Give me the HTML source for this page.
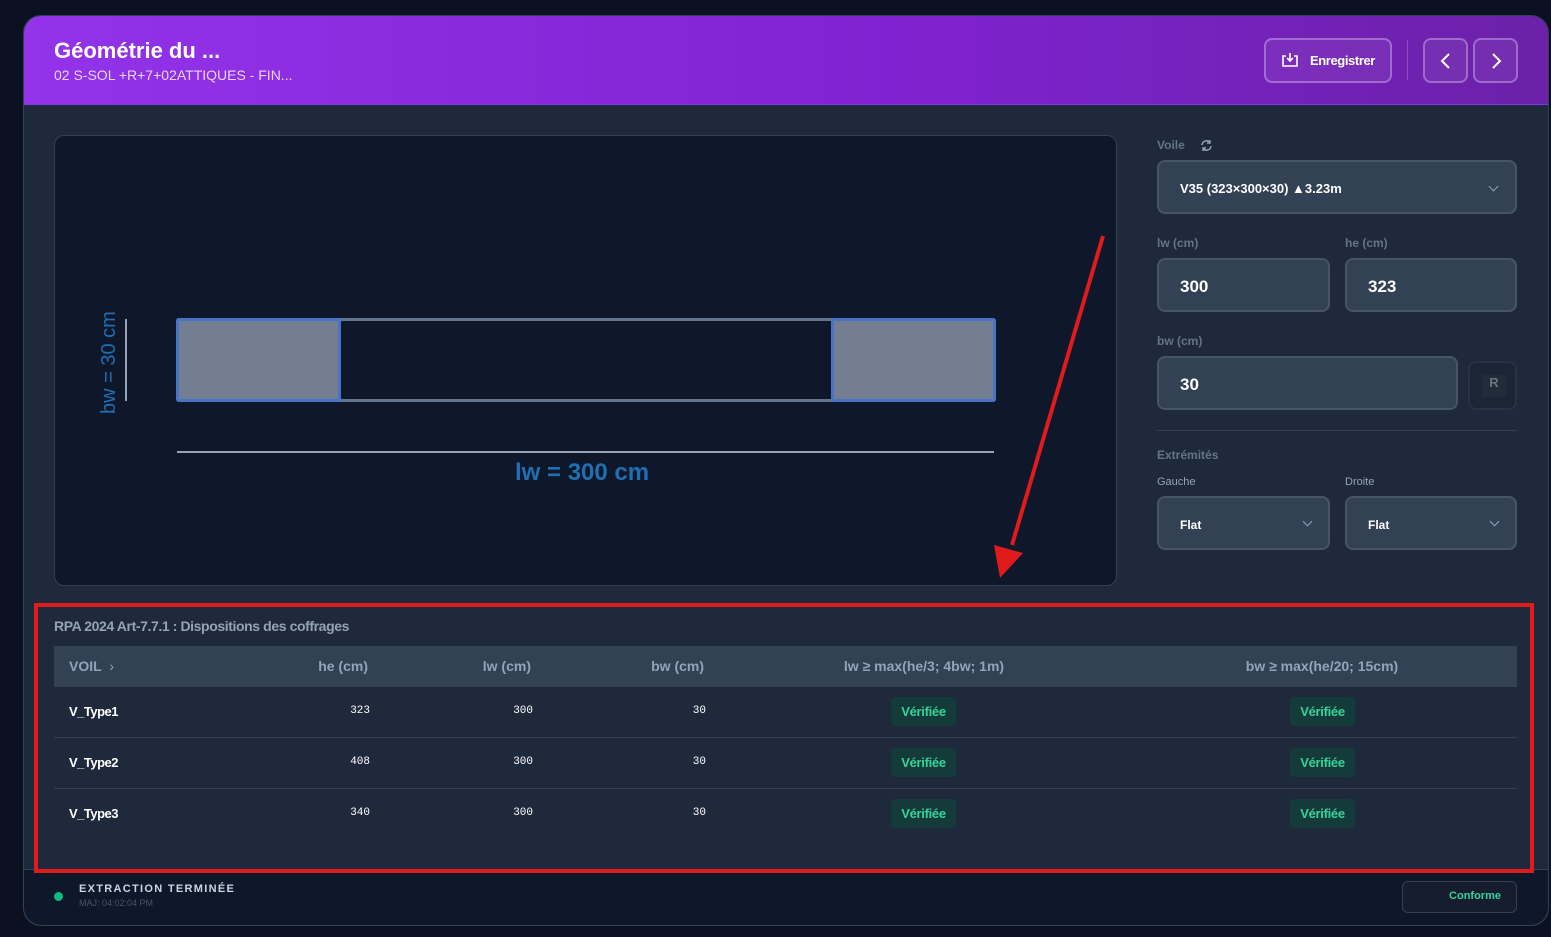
<!DOCTYPE html>
<html><head><meta charset="utf-8"><style>
*{box-sizing:border-box;margin:0;padding:0}
body{width:1551px;height:937px;background:#0b1120;font-family:"Liberation Sans",sans-serif;position:relative;overflow:hidden;color:#e2e8f0}
.card{position:absolute;left:23px;top:15px;width:1526px;height:911px;background:#1e293b;border:1px solid #334155;border-radius:18px;overflow:hidden}
.hdr{position:absolute;left:0;top:0;width:100%;height:89px;background:linear-gradient(90deg,#9333ea,#7e22ce 60%,#6b21a8);border-bottom:1px solid #7c3aed}
.abs{position:absolute}
.btn{position:absolute;border:2px solid rgba(255,255,255,.3);border-radius:8px;background:rgba(255,255,255,.06)}
.lbl{position:absolute;font-size:12px;font-weight:bold;color:#64748b}
.inp{position:absolute;background:#334155;border:2px solid #475569;border-radius:8px;color:#fff;font-weight:bold}
.chev{position:absolute;width:7px;height:7px;border-right:1.5px solid #94a3b8;border-bottom:1.5px solid #94a3b8;transform:rotate(45deg)}
.th{position:absolute;top:658px;font-size:14px;font-weight:bold;color:#94a3b8}
.td{position:absolute;font-family:"Liberation Mono",monospace;font-size:11px;color:#fff}
.nm{position:absolute;left:69px;font-size:13px;font-weight:bold;color:#fff;letter-spacing:-.5px}
.badge{position:absolute;width:65px;height:29px;background:#153a3a;border-radius:4px;color:#34d399;font-size:13px;font-weight:bold;text-align:center;line-height:29px;letter-spacing:-.3px}
.sep{position:absolute;left:54px;width:1463px;height:1px;background:#334155}
</style></head><body>
<div class="card">
 <div class="hdr">
  <div class="abs" style="left:30px;top:22px;font-size:22px;font-weight:bold;color:#fff">Géométrie du ...</div>
  <div class="abs" style="left:30px;top:51px;font-size:14px;color:#e9d5ff">02 S-SOL +R+7+02ATTIQUES - FIN...</div>
  <div class="btn" style="left:1240px;top:22px;width:128px;height:45px">
   <svg class="abs" style="left:15px;top:12px" width="18" height="16" viewBox="0 0 18 16" fill="none" stroke="#fff" stroke-width="1.6"><path d="M5 4H2v10h14V4h-3"/><path d="M9 1v8M6 6l3 3 3-3"/></svg>
   <div class="abs" style="left:44px;top:13px;font-size:13px;font-weight:bold;color:#fff;letter-spacing:-.4px">Enregistrer</div>
  </div>
  <div class="abs" style="left:1383px;top:24px;width:1px;height:40px;background:rgba(255,255,255,.2)"></div>
  <div class="btn" style="left:1399px;top:22px;width:45px;height:45px"><svg class="abs" style="left:13px;top:12px" width="16" height="18"><path d="M11 2L4 9l7 7" stroke="#fff" stroke-width="2" fill="none"/></svg></div>
  <div class="btn" style="left:1449px;top:22px;width:45px;height:45px"><svg class="abs" style="left:14px;top:12px" width="16" height="18"><path d="M4 2l7 7-7 7" stroke="#fff" stroke-width="2" fill="none"/></svg></div>
 </div>
</div>
<!-- canvas -->
<div class="abs" style="left:54px;top:135px;width:1063px;height:451px;background:#0f172a;border:1px solid #334155;border-radius:10px"></div>
<div class="abs" style="left:176px;top:318px;width:820px;height:84px;border:3px solid #64748b;border-radius:3px"></div>
<div class="abs" style="left:176px;top:318px;width:165px;height:84px;background:#737f91;border:3px solid #4a73c8;border-radius:3px"></div>
<div class="abs" style="left:831px;top:318px;width:165px;height:84px;background:#737f91;border:3px solid #4a73c8;border-radius:3px"></div>
<div class="abs" style="left:125px;top:319px;width:2px;height:82px;background:#94a3b8"></div>
<div class="abs" style="left:98px;top:414px;transform:rotate(-90deg);transform-origin:0 0;font-size:20px;color:#1f6fb2;white-space:nowrap">bw = 30 cm</div>
<div class="abs" style="left:177px;top:451px;width:817px;height:2px;background:#94a3b8"></div>
<div class="abs" style="left:515px;top:459px;font-size:24px;font-weight:bold;color:#1f6fb2">lw = 300 cm</div>
<!-- right panel -->
<div class="lbl" style="left:1157px;top:138px">Voile</div>
<svg class="abs" style="left:1200px;top:139px" width="13" height="13" viewBox="0 0 13 13" fill="none" stroke="#94a3b8" stroke-width="1.4"><path d="M2 6a4.5 4.5 0 0 1 8-2.5M11 7a4.5 4.5 0 0 1-8 2.5"/><path d="M10 1v3H7M3 12V9h3"/></svg>
<div class="inp" style="left:1157px;top:160px;width:360px;height:54px;font-size:13px;padding:19px 0 0 21px">V35 (323×300×30) ▲3.23m</div>
<div class="chev" style="left:1490px;top:183px"></div>
<div class="lbl" style="left:1157px;top:236px">lw (cm)</div>
<div class="lbl" style="left:1345px;top:236px">he (cm)</div>
<div class="inp" style="left:1157px;top:258px;width:173px;height:54px;font-size:17px;padding:17px 0 0 21px">300</div>
<div class="inp" style="left:1345px;top:258px;width:172px;height:54px;font-size:17px;padding:17px 0 0 21px">323</div>
<div class="lbl" style="left:1157px;top:334px">bw (cm)</div>
<div class="inp" style="left:1157px;top:356px;width:301px;height:54px;font-size:17px;padding:17px 0 0 21px">30</div>
<div class="abs" style="left:1468px;top:361px;width:49px;height:49px;border:2px solid #273246;border-radius:8px;background:#1b2536"><div class="abs" style="left:12px;top:12px;width:24px;height:22px;background:#222b3a;color:#6b7280;font-size:13px;font-weight:bold;text-align:center">R</div></div>
<div class="abs" style="left:1157px;top:430px;width:360px;height:1px;background:#334155"></div>
<div class="lbl" style="left:1157px;top:448px">Extrémités</div>
<div class="abs" style="left:1157px;top:476px;font-size:11px;color:#94a3b8">Gauche</div>
<div class="abs" style="left:1345px;top:476px;font-size:11px;color:#94a3b8">Droite</div>
<div class="inp" style="left:1157px;top:496px;width:173px;height:54px;font-size:12px;padding:20px 0 0 21px">Flat</div>
<div class="chev" style="left:1304px;top:518px"></div>
<div class="inp" style="left:1345px;top:496px;width:172px;height:54px;font-size:12px;padding:20px 0 0 21px">Flat</div>
<div class="chev" style="left:1491px;top:518px"></div>
<!-- table -->
<div class="abs" style="left:54px;top:618px;font-size:14px;font-weight:bold;color:#94a3b8;letter-spacing:-.4px">RPA 2024 Art-7.7.1 : Dispositions des coffrages</div>
<div class="abs" style="left:54px;top:646px;width:1463px;height:41px;background:#334155"></div>
<div class="th" style="left:69px">VOIL <span style="font-weight:normal;margin-left:4px">›</span></div>
<div class="th" style="left:268px;width:100px;text-align:right">he (cm)</div>
<div class="th" style="left:431px;width:100px;text-align:right">lw (cm)</div>
<div class="th" style="left:604px;width:100px;text-align:right">bw (cm)</div>
<div class="th" style="left:774px;width:300px;text-align:center">lw ≥ max(he/3; 4bw; 1m)</div>
<div class="th" style="left:1172px;width:300px;text-align:center">bw ≥ max(he/20; 15cm)</div>
<div class="sep" style="top:737px"></div><div class="sep" style="top:788px"></div>
<div class="nm" style="top:704px">V_Type1</div><div class="nm" style="top:755px">V_Type2</div><div class="nm" style="top:806px">V_Type3</div>
<div class="td" style="left:340px;top:705px;width:30px;text-align:right">323</div>
<div class="td" style="left:340px;top:756px;width:30px;text-align:right">408</div>
<div class="td" style="left:340px;top:807px;width:30px;text-align:right">340</div>
<div class="td" style="left:503px;top:705px;width:30px;text-align:right">300</div>
<div class="td" style="left:503px;top:756px;width:30px;text-align:right">300</div>
<div class="td" style="left:503px;top:807px;width:30px;text-align:right">300</div>
<div class="td" style="left:676px;top:705px;width:30px;text-align:right">30</div>
<div class="td" style="left:676px;top:756px;width:30px;text-align:right">30</div>
<div class="td" style="left:676px;top:807px;width:30px;text-align:right">30</div>
<div class="badge" style="left:891px;top:697px">Vérifiée</div><div class="badge" style="left:891px;top:748px">Vérifiée</div><div class="badge" style="left:891px;top:799px">Vérifiée</div>
<div class="badge" style="left:1290px;top:697px">Vérifiée</div><div class="badge" style="left:1290px;top:748px">Vérifiée</div><div class="badge" style="left:1290px;top:799px">Vérifiée</div>
<!-- footer -->
<div class="abs" style="left:24px;top:869px;width:1524px;height:56px;background:#0f172a;border-top:1px solid #334155;border-radius:0 0 18px 18px"></div>
<div class="abs" style="left:54px;top:892px;width:9px;height:9px;border-radius:50%;background:#10b981"></div>
<div class="abs" style="left:79px;top:883px;font-size:11px;font-weight:bold;color:#cbd5e1;letter-spacing:1.3px">EXTRACTION TERMINÉE</div>
<div class="abs" style="left:79px;top:898px;font-size:9px;color:#475569">MAJ: 04:02:04 PM</div>
<div class="abs" style="left:1402px;top:881px;width:115px;height:32px;border:1px solid #334155;border-radius:6px;background:#151d2e;color:#34d399;font-size:11px;font-weight:bold;text-align:right;padding:8px 15px 0 0">Conforme</div>
<!-- annotations -->
<div class="abs" style="left:34px;top:603px;width:1500px;height:270px;border:4px solid #e01b1b"></div>
<svg class="abs" style="left:0;top:0" width="1551" height="937"><line x1="1103" y1="236" x2="1012" y2="545" stroke="#e01b1b" stroke-width="4"/><polygon points="1000,578 994,545 1023,553" fill="#e01b1b"/></svg>
</body></html>
